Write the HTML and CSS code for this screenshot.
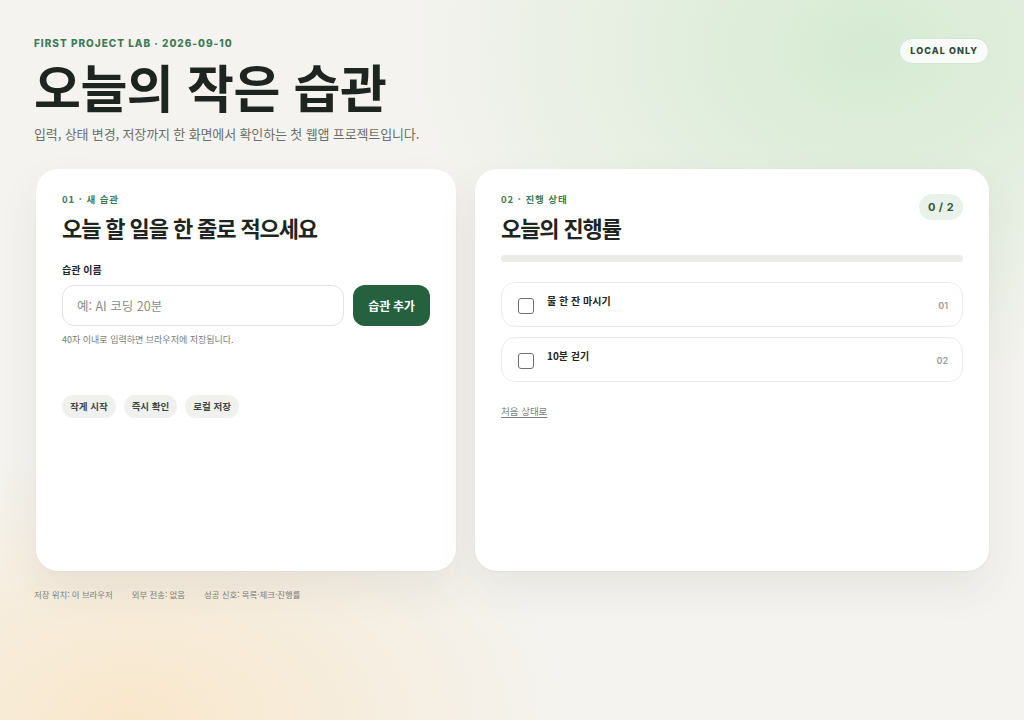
FILE: index.html
```html
<!DOCTYPE html>
<html lang="ko">
<head>
<meta charset="utf-8">
<title>오늘의 작은 습관</title>
<link rel="stylesheet" href="styles.css">
</head>
<body>
<div class="page">
  <header class="hero">
    <div class="hero-text">
      <p class="eyebrow">FIRST PROJECT LAB · 2026-09-10</p>
      <h1 class="title">오늘의 작은 습관</h1>
      <p class="subtitle">입력, 상태 변경, 저장까지 한 화면에서 확인하는 첫 웹앱 프로젝트입니다.</p>
    </div>
    <span class="local-badge">LOCAL ONLY</span>
  </header>

  <main class="grid">
    <section class="card card-form">
      <p class="card-eyebrow">01 · 새 습관</p>
      <h2 class="card-title">오늘 할 일을 한 줄로 적으세요</h2>
      <label class="field-label" for="habit">습관 이름</label>
      <div class="field-row">
        <input id="habit" class="field-input" type="text" placeholder="예: AI 코딩 20분">
        <button class="add-btn" type="button">습관 추가</button>
      </div>
      <p class="helper">40자 이내로 입력하면 브라우저에 저장됩니다.</p>
      <div class="chips">
        <span class="chip">작게 시작</span>
        <span class="chip">즉시 확인</span>
        <span class="chip">로컬 저장</span>
      </div>
    </section>

    <section class="card card-progress">
      <div class="progress-head">
        <div>
          <p class="card-eyebrow">02 · 진행 상태</p>
          <h2 class="card-title">오늘의 진행률</h2>
        </div>
        <span class="count-badge">0 / 2</span>
      </div>
      <div class="bar"><div class="bar-fill" style="width:0%"></div></div>
      <ul class="list">
        <li class="item">
          <span class="check"></span>
          <span class="item-text">물 한 잔 마시기</span>
          <span class="item-num">01</span>
        </li>
        <li class="item">
          <span class="check"></span>
          <span class="item-text">10분 걷기</span>
          <span class="item-num">02</span>
        </li>
      </ul>
      <a class="reset" href="#">처음 상태로</a>
    </section>
  </main>

  <footer class="footer">
    <span>저장 위치: 이 브라우저</span>
    <span>외부 전송: 없음</span>
    <span>성공 신호: 목록·체크·진행률</span>
  </footer>
</div>
</body>
</html>
```

FILE: styles.css
```css
* { box-sizing: border-box; }
html, body { margin: 0; height: 100%; }
body {
  font-family: "Noto Sans CJK KR", "Noto Sans", sans-serif;
  color: #1f2621;
  background:
    radial-gradient(ellipse 460px 330px at 870px 50px, rgba(208, 233, 205, 0.85), rgba(208, 233, 205, 0) 100%),
    radial-gradient(ellipse 440px 270px at 130px 720px, rgba(250, 228, 194, 0.8), rgba(250, 228, 194, 0) 100%),
    #f4f3ef;
  overflow: hidden;
}
.page {
  padding: 36px 35px 0 34px;
}
.hero {
  display: flex;
  justify-content: space-between;
  align-items: flex-start;
}
.eyebrow {
  margin: 0;
  font-family: Inter, "Noto Sans", sans-serif;
  font-size: 10px;
  font-weight: 800;
  letter-spacing: 0.1em;
  color: #3e7a55;
  line-height: 14px;
}
.title {
  margin: 6px 0 0 0;
  font-size: 51px;
  font-weight: 700;
  letter-spacing: -0.01em;
  line-height: 60px;
  color: #1e2520;
}
.subtitle {
  margin: 9px 0 0 0;
  font-size: 13px;
  color: #6b6f6b;
  line-height: 18px;
  letter-spacing: -0.01em;
}
.local-badge {
  margin-top: 2px;
  padding: 0 10px;
  height: 26px;
  line-height: 24px;
  border: 1px solid #d3e4d4;
  border-radius: 13px;
  background: rgba(255, 255, 255, 0.8);
  font-family: Inter, sans-serif;
  font-size: 9px;
  font-weight: 800;
  letter-spacing: 0.12em;
  color: #2c4a36;
}
.grid {
  margin-top: 26px;
  margin-left: 2px;
  display: grid;
  grid-template-columns: 420px 1fr;
  gap: 19px;
}
.card {
  height: 402px;
  background: #fff;
  border-radius: 22px;
  box-shadow: 0 18px 40px rgba(60, 60, 50, 0.08), 0 1px 2px rgba(0, 0, 0, 0.03);
  padding: 23px 26px;
}
.card-eyebrow {
  margin: 0;
  font-size: 9.5px;
  font-weight: 700;
  letter-spacing: 0.1em;
  color: #3e7a55;
  line-height: 14px;
}
.card-title {
  margin: 6px 0 0 0;
  font-size: 22px;
  font-weight: 700;
  letter-spacing: -0.05em;
  line-height: 30px;
  color: #1e2520;
}
.field-label {
  display: block;
  margin-top: 21px;
  font-size: 10px;
  font-weight: 700;
  line-height: 14px;
  color: #1e2520;
}
.field-row {
  margin-top: 8px;
  display: flex;
  gap: 9px;
}
.field-input {
  flex: 1;
  height: 41px;
  border: 1px solid #e1e1de;
  border-radius: 12px;
  padding: 0 14px;
  font-family: inherit;
  font-size: 12.5px;
  color: #1e2520;
  background: #fff;
  outline: none;
}
.field-input::placeholder { color: #8a8d8a; }
.add-btn {
  width: 77px;
  height: 41px;
  border: 0;
  border-radius: 12px;
  background: #25613e;
  color: #fff;
  font-family: inherit;
  font-size: 12px;
  font-weight: 700;
  letter-spacing: -0.02em;
}
.helper {
  margin: 7px 0 0 0;
  font-size: 9px;
  color: #7a7d7a;
  line-height: 14px;
}
.chips {
  margin-top: 48px;
  display: flex;
  gap: 8px;
}
.chip {
  height: 23px;
  line-height: 23px;
  padding: 0 8px;
  border-radius: 12px;
  background: #f0f1ee;
  font-size: 9.5px;
  font-weight: 700;
  color: #414541;
}
.progress-head {
  display: flex;
  justify-content: space-between;
  align-items: flex-start;
}
.count-badge {
  margin-top: 2px;
  height: 26px;
  line-height: 26px;
  padding: 0 9px;
  border-radius: 13px;
  background: #e9f2ea;
  font-family: Inter, sans-serif;
  font-size: 11px;
  font-weight: 700;
  letter-spacing: 0.04em;
  color: #2f5a3d;
}
.bar {
  margin-top: 13px;
  height: 7px;
  border-radius: 4px;
  background: #ebebea;
  overflow: hidden;
}
.bar-fill { height: 100%; background: #25613e; }
.list {
  list-style: none;
  margin: 20px 0 0 0;
  padding: 0;
  display: flex;
  flex-direction: column;
  gap: 10px;
}
.item {
  height: 45px;
  border: 1px solid #e9e9e7;
  border-radius: 14px;
  display: flex;
  align-items: center;
  padding: 0 14px 0 16px;
}
.check {
  width: 16px;
  height: 16px;
  border: 1.5px solid #6d706d;
  border-radius: 3px;
  flex: none;
  margin-top: 2px;
}
.item-text {
  margin-left: 13px;
  flex: 1;
  font-size: 10px;
  font-weight: 700;
  color: #1e2520;
  align-self: flex-start;
  margin-top: 10px;
}
.item-num {
  font-family: Inter, sans-serif;
  font-size: 9px;
  font-weight: 600;
  color: #9a9c9a;
  margin-top: 2px;
}
.reset {
  display: inline-block;
  margin-top: 22px;
  font-size: 9.5px;
  color: #7a7d7a;
  text-decoration: underline;
  text-underline-offset: 2px;
}
.footer {
  margin-top: 17px;
  display: flex;
  gap: 19px;
  font-size: 8.4px;
  color: #7a7c78;
}
```
